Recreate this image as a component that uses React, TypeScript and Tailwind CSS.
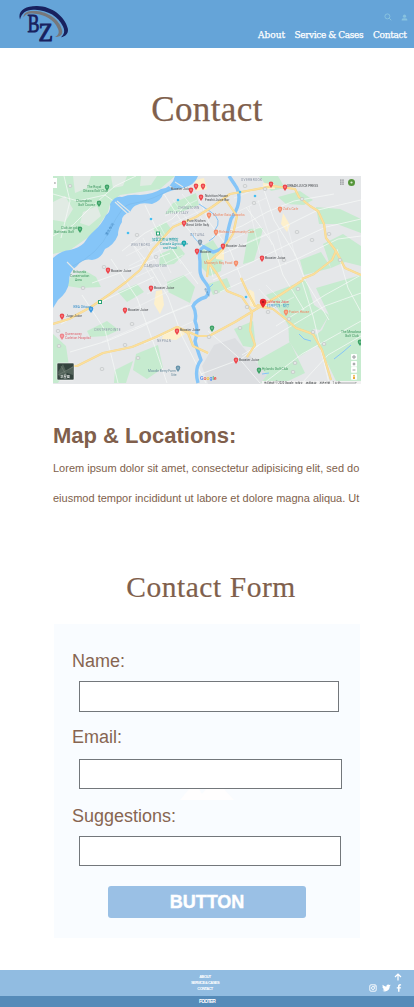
import React from 'react';

type Label = [number, number, string, string?];

const parks = [
  'M0 0H122L107 13L87 16L67 19L57 28L55 36L40 58L17 74L0 78Z',
  'M143 17L120 27L112 38L128 36L146 29Z',
  'M17 102L31 94L43 101L48 111L27 112L14 110Z',
  'M100 52L113 46L119 54L106 64Z',
  'M107 78L126 70L132 78L121 88L106 90Z',
  'M149 70L160 64L170 80L168 95L157 100L148 91Z',
  'M196 53L210 52L207 65L201 85L190 88Z',
  'M206 0H225L232 12L218 15Z',
  'M225 21L247 15L260 24L251 29L233 28Z',
  'M263 31L287 33L308 43V57L284 48L266 48Z',
  'M270 68L290 58L308 70V90L292 86L278 92Z',
  'M247 84L268 76L278 92L251 99Z',
  'M34 155L54 145L66 154L53 160L37 161Z',
  'M83 178L105 169L110 192L94 203L80 194Z',
  'M0 158L13 170L16 190L5 207H0Z',
  'M62 194L80 185L73 207H61Z',
  'M65 116L84 108L91 116L74 126Z',
  'M155 108L174 102L178 112L160 119Z',
  'M181 153L200 145L203 172L190 170Z',
  'M213 119L253 104L261 129L276 139L267 154L235 149L224 131Z',
  'M263 112L308 99V207H284L268 174L258 163L269 154L276 139Z',
  'M205 184L237 166L252 197L231 207H203Z',
  'M235 140L260 153L267 167L246 181L236 165Z',
  'M114 106L131 99L142 111L137 127L115 116Z',
];

const clearings = [
  'M0 26L12 20L20 33L12 46L0 44Z',
  'M20 0H38L34 12L22 17Z',
  'M30 36L44 30L48 40L36 50L27 47Z',
  'M58 0H74L70 10L60 12Z',
  'M88 0H104L98 9L87 10Z',
];

const roads = [
  'M0 60L20 49L36 33L62 10L83 0',
  'M0 18L25 25L52 19L70 32',
  'M11 0L17 25L8 62',
  'M69 75L92 57L119 43L136 26',
  'M78 66L94 86L115 121L129 160L153 207',
  'M58 83L84 122L102 171L114 207',
  'M39 107L64 98L87 89L117 77',
  'M29 119L52 154L65 207',
  'M8 148L43 128L73 114L101 101',
  'M17 176L54 165L88 151L112 139L145 126',
  'M92 29L103 52L119 73L145 108',
  'M111 18L126 42L154 76L160 101',
  'M145 20L156 46L177 74L189 104L200 129',
  'M193 31L220 68L230 99L251 134',
  'M211 14L221 44L242 78L252 104L276 144',
  'M159 61L189 50L214 36L241 25L281 18',
  'M169 78L204 63L235 49L265 34L308 24',
  'M160 104L197 87L232 70L273 51L308 43',
  'M167 116L204 99L246 82L285 63L308 60',
  'M223 150L272 119L308 99',
  'M189 179L233 153L272 130L308 117',
  'M211 207L249 178L308 145',
  'M249 207L275 179L308 160',
  'M248 102L260 140L276 207',
  'M284 73L295 112L308 136',
  'M155 155L184 180L207 207',
  'M148 198L188 183L206 169',
];

const streets = [
  'M80 69L103 110', 'M90 62L113 105', 'M98 56L118 97', 'M106 48L128 88',
  'M73 80L116 58', 'M76 90L122 67', 'M83 101L130 79', 'M94 118L139 96',
  'M120 24L145 58', 'M129 18L153 48', 'M112 40L144 24', 'M119 48L149 34',
  'M181 22L216 8', 'M180 38L213 22', 'M180 63L207 51', 'M182 72L213 58',
  'M196 30L207 78', 'M205 24L219 69', 'M224 55L233 89', 'M234 48L242 80',
  'M74 136L116 115', 'M82 152L135 129', 'M91 168L143 144', 'M49 166L98 145',
  'M206 113L221 130', 'M213 109L228 124', 'M218 133L241 121',
];

const highways = [
  'M87 94L100 73L120 51L143 41L159 31L177 18L199 14L220 10L242 13L246 21L257 30L265 35L271 48L273 62L283 75L292 92L308 99',
  'M0 148L16 143L38 131L57 118L73 106L87 94',
  'M7 189L24 190L50 177L79 171L103 161L124 151L145 160L156 160L182 146L205 132L227 119L250 104',
  'M154 84L164 98L174 115L189 121L199 136L197 154L202 169L194 181',
  'M204 129L220 133L234 144L243 152L260 158L269 174L278 204',
  'M173 24L184 40L180 58L170 73L156 86L154 101',
  'M124 151L135 157L140 170L155 177',
  'M188 102L194 115L202 130L215 132',
  'M283 75L279 84L261 98L249 103',
];

const pins: [number, number][] = [
  [138, 15], [143, 11], [150, 11], [148, 22], [131, 48], [144, 76],
  [55, 95], [218, 9], [232, 12], [170, 71], [209, 83], [98, 113],
  [72, 135], [9, 141], [124, 156], [183, 185],
];

const orangePins: [number, number][] = [
  [156, 40], [163, 57], [227, 34], [183, 88], [233, 137],
];

const greenPins: [number, number][] = [
  [54, 12], [46, 28], [27, 54], [159, 153], [206, 195], [307, 167],
];

const juiceLabels: Label[] = [
  [118, 14, 'Booster Juice'], [152, 21, 'Nutrition House'], [134, 46, 'Pure Kitchen'],
  [133, 50, 'Great Little Italy'], [147, 77, 'Booster'],
  [58, 96, 'Booster Juice'], [234, 11, 'URBAN JUICE PRESS'],
  [173, 71, 'Booster Juice'], [212, 83, 'Booster Juice'], [101, 113, 'Booster Juice'],
  [75, 135, 'Booster Juice'], [13, 141, 'Jugo Juice'], [127, 155, 'Booster Juice'],
  [186, 185, 'Booster Juice'], [152, 25, 'Freshii Juice Bar'],
];

const placeLabels: Label[] = [
  [34, 12, 'The Royal', '#3d955f'], [30, 16, 'Ottawa Golf Club', '#3d955f'],
  [23, 26, 'Champlain', '#3d955f'], [25, 30, 'Golf Course', '#3d955f'],
  [8, 53, 'Club de golf', '#3d955f'], [1, 57, 'Gatineau Golf', '#3d955f'],
  [20, 97, 'Britannia', '#3d955f'], [17, 101, 'Conservation', '#3d955f'],
  [22, 105, 'Area', '#3d955f'], [209, 194, 'Hylands Golf Club', '#3d955f'],
  [288, 157, 'The Meadows', '#3d955f'], [292, 161, 'Golf Club', '#3d955f'],
  [12, 159, 'Queensway', '#df6670'], [12, 163, 'Carleton Hospital', '#df6670'],
  [160, 40, 'Mother Gaia Coworks', '#ed8865'], [166, 57, 'Rideau Community Cafe', '#ed8865'],
  [230, 34, 'Zak’s Cafe', '#ed8865'], [151, 88, 'Mooney’s Bay Food', '#ed8865'],
  [236, 137, 'Fusion House', '#ed8865'], [213, 127, 'California Juice', '#ea4950'],
  [214, 131, '打开时间 · 餐厅', '#318fc8'], [20, 132, 'IKEA Ottawa', '#328cc9'],
  [99, 65, '加拿大农业博物馆', '#1598a1'], [107, 69, 'Canada Agriculture', '#1598a1'],
  [110, 73, 'and Food', '#1598a1'], [95, 196, 'Moodie Berry Farm', '#66899b'],
  [118, 200, 'Site', '#66899b'],
];

const areas: Label[] = [
  [125, 33, 'CHINATOWN'], [113, 38, 'LITTLE ITALY'], [78, 70, 'WESTBORO'],
  [91, 91, 'CARLINGTON'], [188, 5, 'OVERBROOK'], [41, 155, 'CENTREPOINTE'],
  [104, 166, 'NEPEAN'], [137, 60, 'OTTAWA'],
];

const shields: [number, number][] = [
  [17, 10], [106, 60], [84, 59], [51, 91], [103, 81], [98, 90],
  [192, 10], [212, 13], [249, 23], [201, 27], [244, 56], [276, 58], [259, 64],
  [231, 84], [287, 84], [30, 112], [5, 155], [6, 170], [49, 193], [79, 148],
  [85, 182], [72, 169], [163, 116], [194, 131], [215, 136], [245, 113],
  [187, 152], [260, 156], [236, 143], [240, 196], [271, 168], [242, 187], [156, 161],
];

function Pin({ x, y, color }: { x: number; y: number; color: string }) {
  return (
    <g transform={`translate(${x} ${y})`}>
      <path d="M0 3Q-2.3 0-2.3-1.3A2.3 2.3 0 1 1 2.3-1.3Q2.3 0 0 3" fill={color} />
      <circle cx="0" cy="-1" r=".8" fill="#fff" opacity=".5" />
    </g>
  );
}

function LocationMap() {
  return (
    <svg viewBox="0 0 308 208" className="block h-[208px] w-[308px] overflow-hidden blur-[0.3px]" fontFamily="Roboto, 'Noto Sans CJK SC', sans-serif">
      <rect width="308" height="208" fill="#e5e7e9" />
      {parks.map((d) => <path key={d} d={d} fill="#c6ebcf" />)}
      {clearings.map((d) => <path key={d} d={d} fill="#e1ebe4" />)}
      <path d="M161 169L182 162L214 199L207 208H155L149 190Z" fill="#dcdee1" />
      <path d="M103 115L109 114L111 129L107 138L101 128ZM111 156L124 150L132 158L123 164L109 163ZM196 113L201 116L203 132L197 130ZM230 37L237 49L234 56L228 48ZM142 4L151 2L154 13L143 15ZM163 77L171 73L171 84L163 83ZM210 7L221 8L222 13L210 13Z" fill="#fdf0cc" />
      <g fill="none" stroke="#f4f5f5" strokeWidth=".55">{streets.map((d) => <path key={d} d={d} />)}</g>
      <g fill="none" stroke="#f6f8f7" strokeWidth=".75" strokeLinejoin="round">{roads.map((d) => <path key={d} d={d} />)}</g>
      <path d="M0 82Q9 74 17 74Q26 72 31 67Q37 58 41 55Q49 48 53 39Q58 36 57 28Q62 19 69 21Q76 18 87 19Q101 18 108 13Q119 12 122 0H145Q142 9 130 12Q118 14 110 18Q108 25 99 28Q88 26 84 29Q80 30 77 36Q68 39 69 46Q65 52 65 59Q61 69 52 73Q48 83 39 84Q30 82 24 90Q16 95 16 106Q15 116 5 124L0 132Z" fill="#85c5f8" />
      <path d="M18 91Q45 79 57 54T77 28Q100 25 123 10" stroke="#78b7e6" strokeWidth=".5" fill="none" />
      <path d="M14 86L26 98M62 26L76 39M64 25L77 36M115 9L121 13M122 6L130 11" stroke="#e3e7e7" strokeWidth="1.1" />
      <g fill="none" stroke="#85c5f8" strokeLinejoin="round">
        <path d="M176 0L182 9Q188 17 185 29Q184 34 178 43Q174 57 173 66Q170 74 160 76L151 71Q145 73 147 85V94Q147 100 152 106Q159 114 153 121Q143 124 140 130Q144 137 142 145Q146 154 142 165Q144 173 148 184Q141 193 145 207" strokeWidth="3.4" />
        <path d="M138 57Q144 67 153 71M146 28L158 36Q170 44 162 54Q166 59 156 65M246 158L251 163L258 165M281 183L290 176L298 169" strokeWidth="1" />
        <path d="M209 198L216 197M94 26L99 24M157 111L160 108" strokeWidth="1" />
      </g>
      <g fill="none" stroke="#f3d588" strokeWidth="2.2" strokeLinejoin="round">{highways.map((d) => <path key={d} d={d} />)}</g>
      <g fill="none" stroke="#fbdf9d" strokeWidth="1.5" strokeLinejoin="round">{highways.map((d) => <path key={d} d={d} />)}</g>
      {shields.map(([x, y]) => <rect key={`${x}-${y}`} x={x - 1.6} y={y - 1.4} width="3.2" height="2.8" rx=".7" fill="#e6e8e8" stroke="#b5b9bb" strokeWidth=".55" />)}
      <g fill="#fff" stroke="#2aa275" strokeWidth="1"><rect x="103.5" y="56" width="3" height="3" /><rect x="45.5" y="124.5" width="3" height="3" /></g>
      <g fill="#46bff2"><circle cx="75" cy="57" r="1.3" /><circle cx="98" cy="43" r="1.3" /><circle cx="125" cy="24" r="1.3" /><circle cx="193" cy="121" r="1.3" /><circle cx="187" cy="16" r="1.3" /><circle cx="202" cy="20" r="1.3" /></g>
      {areas.map(([x, y, text]) => <text key={text} x={x} y={y} fontSize="3.2" letterSpacing=".35" fill="#8d97a8">{text}</text>)}
      <text x="54" y="60" fontSize="3.5" fill="#3f82ba" transform="rotate(-58 54 60)">渥太华河</text>
      <text x="151" y="113" fontSize="3" fill="#3f82ba" transform="rotate(58 151 113)">Rideau</text>
      {placeLabels.map(([x, y, text, color]) => <text key={`${text}-${y}`} x={x} y={y} fontSize="3.3" fill={color}>{text}</text>)}
      {juiceLabels.map(([x, y, text]) => <text key={`${x}-${y}`} x={x} y={y} fontSize="3.3" fill="#484b4f">{text}</text>)}
      {pins.map(([x, y]) => <Pin key={`${x}-${y}`} x={x} y={y} color="#ed454b" />)}
      {orangePins.map(([x, y]) => <Pin key={`${x}-${y}`} x={x} y={y} color="#f58c69" />)}
      {greenPins.map(([x, y]) => <Pin key={`${x}-${y}`} x={x} y={y} color="#3ba265" />)}
      <Pin x={9} y={161} color="#ef858b" /><Pin x={38} y={134} color="#3a99e3" /><Pin x={131} y={68} color="#18a7ad" /><Pin x={147} y={67} color="#7f99ad" /><Pin x={125} y={193} color="#6693aa" />
      <path d="M210 132Q206.8 127.5 206.8 126A3.2 3.2 0 1 1 213.2 126Q213.2 128 210 132Z" fill="#ea272c" /><circle cx="210" cy="126" r="1.1" fill="#9c1b20" />
      <rect x="0" y="2" width="4" height="10" fill="#fff" /><path d="M1.5 6L3 7L1.5 8Z" fill="#737373" />
      <g fill="#8b8e90">{[287, 289.2].map((x) => [3.5, 5.5, 7.5].map((y) => <rect key={`${x}-${y}`} x={x} y={y} width="1.6" height="1.2" />))}</g>
      <circle cx="298.5" cy="6.5" r="3.5" fill="#56963b" /><circle cx="298.5" cy="6.5" r="1.1" fill="#dcebd6" />
      <rect x="4" y="187" width="17" height="17" rx="1" fill="#34443e" stroke="#fafafa" strokeWidth=".6" />
      <path d="M5 196L10 188L13 195L20 190V199L14 197L9 203L6 200Z" fill="#53635a" /><path d="M8 190L15 202M5 199L20 191" stroke="#7e8b81" strokeWidth=".5" /><text x="7.3" y="202" fontSize="3.2" fill="#fff">卫星图</text>
      <text x="147" y="204" fontSize="5.2" fontWeight="500"><tspan fill="#4285f4">G</tspan><tspan fill="#ea4335">o</tspan><tspan fill="#fbbc05">o</tspan><tspan fill="#4285f4">g</tspan><tspan fill="#34a853">l</tspan><tspan fill="#ea4335">e</tspan></text>
      {[178, 185, 191, 198].map((y) => <rect key={y} x="298" y={y} width="6" height="5.7" rx=".7" fill="#fff" />)}
      <circle cx="301" cy="181" r="1.2" fill="none" stroke="#63686b" strokeWidth=".7" /><path d="M299.6 188H302.4M301 186.6V189.4M299.6 194H302.4" stroke="#63686b" strokeWidth=".65" /><circle cx="301" cy="199.5" r=".8" fill="#eaab39" /><path d="M300 200.5H302V203H300Z" fill="#eaab39" />
      <rect x="209" y="205" width="99" height="3" fill="#f2f2f2" /><text x="211" y="207.5" fontSize="2.7" fill="#34383b">地图数据 © 2020 Google</text><text x="242" y="207.5" fontSize="2.7" fill="#34383b">加拿大　使用条款　发送反馈　1 公里</text><path d="M287 206V207H303V206" fill="none" stroke="#60666a" strokeWidth=".5" />
    </svg>
  );
}

function Logo() {
  return (
    <svg viewBox="0 0 52 38" className="ml-[18px] mt-[5px] h-[38px] w-[52px]">
      <path d="M2 14.5C-.8 6 7 .8 19 1C34 1.2 47 11.5 49.8 23.5C50.7 28 48 31.3 43 32.2C46.5 29 47 25.5 45 21.5C40.5 11.5 30 5.4 17 4.8C8 4.3 4 7.8 2 14.5Z" fill="#18215e" />
      <path d="M5.5 12.5C5.4 7 10 5.6 18 6C30 6.7 42 15 44 25C45 29.4 42.5 32 37 32C41 30 41.5 27 39.8 23.5C36 14.8 27 9.7 17 8.8C10 8 7.4 9 5.5 12.5Z" fill="#77777a" />
      <text x="9.5" y="26.5" textLength="12" lengthAdjust="spacingAndGlyphs" fontSize="26" fontFamily="Liberation Serif, serif" fill="#18215e" stroke="#18215e" strokeWidth=".9">B</text>
      <text x="20.5" y="35.5" textLength="14.5" lengthAdjust="spacingAndGlyphs" fontSize="26" fontFamily="Liberation Serif, serif" fill="#18215e" stroke="#18215e" strokeWidth=".9">Z</text>
    </svg>
  );
}

function Field({ label, labelClass, inputClass }: { label: string; labelClass: string; inputClass: string }) {
  return (
    <label className="block">
      <span className={`block pl-[18px] text-[18px] leading-5 text-[#876551] ${labelClass}`}>{label}</span>
      <input aria-label={label} className={`ml-[25px] block border border-[#73777b] bg-white px-2 outline-none ${inputClass}`} />
    </label>
  );
}

export default function App() {
  return (
    <div className="flex h-[1007px] w-[414px] flex-col overflow-hidden bg-white font-['Liberation_Sans',Arial,sans-serif] text-[#805f4c]">
      <header className="flex h-12 shrink-0 justify-between bg-[#65a4d8]">
        <Logo />
        <div className="flex flex-col items-end pt-[13px] pr-[6px]">
          <div className="flex h-2 items-center gap-[9px] text-[#88c2df]">
            <svg viewBox="0 0 8 8" className="size-2" fill="none" stroke="currentColor" strokeWidth="1"><circle cx="3.4" cy="3.4" r="2.5" /><path d="M5.3 5.3L7.3 7.3" /></svg>
            <svg viewBox="0 0 8 8" className="size-[7px]" fill="currentColor"><circle cx="4" cy="2.5" r="1.8" /><path d="M.7 7.4V6.5Q.7 4.8 4 4.8T7.3 6.5V7.4Z" /></svg>
          </div>
          <nav className="mt-[8px] flex font-['DejaVu_Serif',serif] text-[9px] leading-[12px] whitespace-nowrap text-white [-webkit-text-stroke:0.25px_white]">
            <a className="w-[36.5px]">About</a>
            <a className="w-[78.5px] tracking-[-0.4px]">Service &amp; Cases</a>
            <a className="w-[35px] tracking-[-0.32px]">Contact</a>
          </nav>
        </div>
      </header>
      <main className="flex h-[922px] shrink-0 flex-col px-[53px]">
        <h1 className="mt-[42px] h-[44px] text-center font-['Liberation_Serif',serif] text-[35px] leading-[40px] tracking-[0.4px] [-webkit-text-stroke:0.25px_#805f4c]">Contact</h1>
        <div className="mt-[42px]"><LocationMap /></div>
        <h2 className="mt-[38px] text-[22px] leading-7 font-bold">Map &amp; Locations:</h2>
        <p className="mt-[3px] text-[11px] leading-[30px] whitespace-nowrap">Lorem ipsum dolor sit amet, consectetur adipisicing elit, sed do<br />eiusmod tempor incididunt ut labore et dolore magna aliqua. Ut</p>
        <h2 className="mt-[54px] h-[44px] pl-[8px] text-center font-['Liberation_Serif',serif] text-[29.5px] leading-[40px] tracking-[0.55px] whitespace-nowrap [-webkit-text-stroke:0.2px_#805f4c]">Contact Form</h2>
        <form className="ml-px mt-[13px] h-[314px] w-[306px] bg-[#f9fcff] pt-[27px]">
          <Field label="Name:" labelClass="mb-[10px]" inputClass="h-[31px] w-[260px]" />
          <Field label="Email:" labelClass="mt-[15px] mb-[12px]" inputClass="h-[30px] w-[263px]" />
          <svg viewBox="0 0 54 11" className="ml-[126px] block h-[11px] w-[54px]"><path d="M0 11L9 0H19L22 5L26 0H44L54 11Z" fill="#fffefe" /></svg>
          <Field label="Suggestions:" labelClass="mt-[6px] mb-[10px]" inputClass="h-[30px] w-[262px]" />
          <button type="button" className="mt-5 ml-[54px] flex h-8 w-[198px] items-center justify-center rounded-[3px] bg-[#9ac0e5] text-[18px] font-bold text-white [-webkit-text-stroke:0.4px_white]">BUTTON</button>
        </form>
      </main>
      <footer className="h-[37px] shrink-0 text-white">
        <div className="grid h-[26px] grid-cols-3 bg-[#91bce1]">
          <nav className="col-start-2 flex flex-col items-center pt-[4px] pr-[4px] text-[4px] leading-[6px] font-bold tracking-[-0.55px] whitespace-nowrap"><a>ABOUT</a><a>SERVICE &amp; CASES</a><a>CONTACT</a></nav>
          <div className="flex flex-col items-end pt-[3px] pr-[12px]">
            <svg viewBox="0 0 8 8" className="size-2" fill="none" stroke="currentColor" strokeWidth="1.2"><path d="M4 7.5V1M1 4L4 1L7 4" /></svg>
            <div className="mt-[3px] flex items-center gap-[5px]">
              <svg viewBox="0 0 8 8" className="size-2" fill="none" stroke="currentColor" strokeWidth=".9"><rect x=".8" y=".8" width="6.4" height="6.4" rx="1.2" /><circle cx="4" cy="4" r="1.5" /><circle cx="5.9" cy="2.1" r=".3" /></svg>
              <svg viewBox="0 0 24 20" className="h-2 w-[9px]" fill="currentColor"><path d="M23 3l-2.4 2.6C21 14 14.5 19 8 19c-3 0-5.3-.8-7-2 3 .2 5-.6 6.5-2-2.5 0-4-1.4-4.6-3.3h2C2.5 11 1.3 9.3 1.4 6.8l2 .6C1.3 5.8.8 3 2 1c2.7 3 6 5 10 5.2C11.3 2.8 13.7.5 16.5.5c1.5 0 2.7.6 3.6 1.6L23 1l-1.8 2.5Z" /></svg>
              <svg viewBox="0 0 8 10" className="h-[8px] w-1.5" fill="currentColor"><path d="M2.7 10V5.7H1V3.9h1.7V2.5C2.7.8 3.7 0 5.2 0h1.6v1.7h-1c-.8 0-1.1.4-1.1 1.1v1.1h2l-.3 1.8H4.7V10Z" /></svg>
            </div>
          </div>
        </div>
        <div className="flex h-[11px] items-center justify-center bg-[#558bb9] text-[5px] font-bold tracking-[-0.8px]">FOOTER</div>
      </footer>
    </div>
  );
}
